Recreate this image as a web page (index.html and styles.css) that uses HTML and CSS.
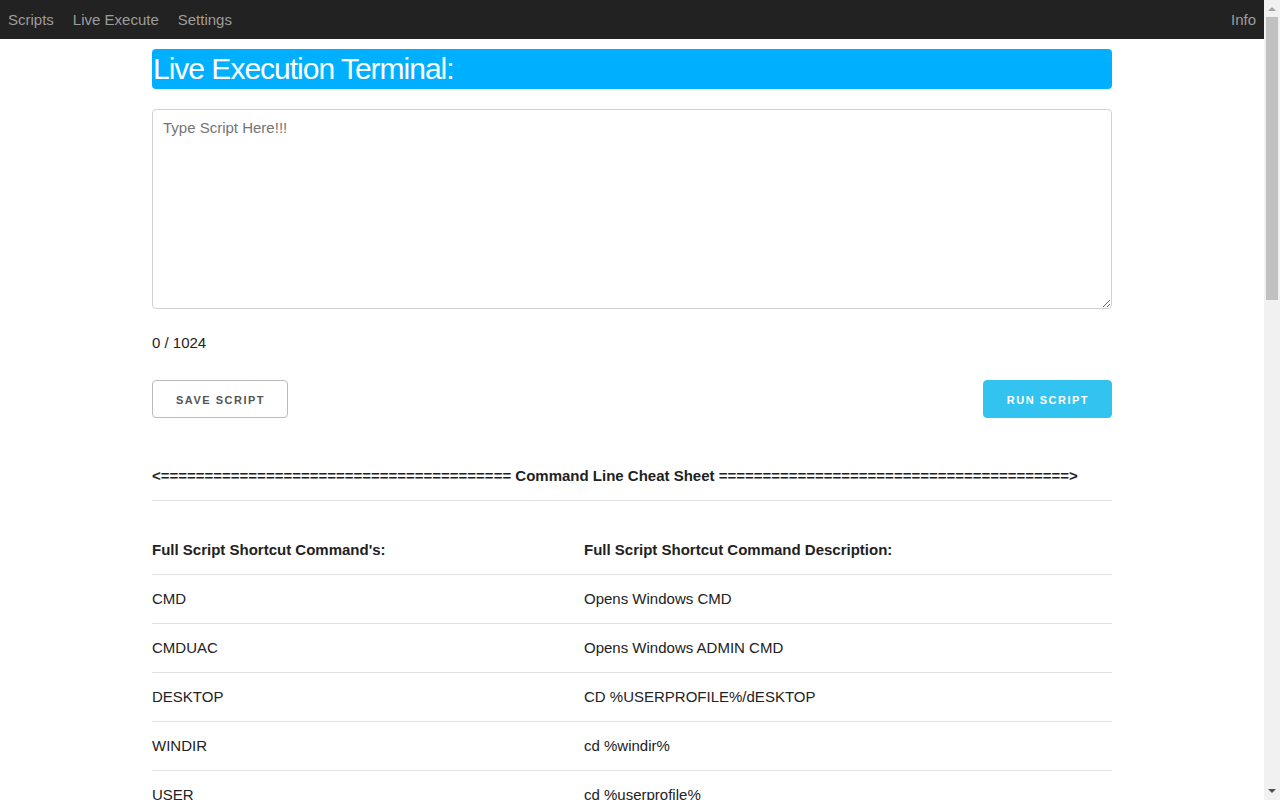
FILE: index.html
```html
<!DOCTYPE html>
<html lang="en">
<head>
<meta charset="utf-8">
<title>Live Execute</title>
<link rel="stylesheet" href="styles.css">
</head>
<body>
<div class="page">
<nav class="topnav">
  <div class="nav-left">
    <a href="#">Scripts</a>
    <a href="#">Live Execute</a>
    <a href="#">Settings</a>
  </div>
  <a href="#" class="nav-right">Info</a>
</nav>
<main class="container">
  <h3 class="title">Live Execution Terminal:</h3>
  <textarea class="script-box" placeholder="Type Script Here!!!"></textarea>
  <p class="counter">0 / 1024</p>
  <div class="actions">
    <button class="button">Save Script</button>
    <button class="button button-primary">Run Script</button>
  </div>
  <table class="cheat-title">
    <thead><tr><th>&lt;======================================== Command Line Cheat Sheet ========================================&gt;</th></tr></thead>
  </table>
  <table class="cheat">
    <colgroup><col class="col1"><col></colgroup>
    <thead>
      <tr><th>Full Script Shortcut Command's:</th><th>Full Script Shortcut Command Description:</th></tr>
    </thead>
    <tbody>
      <tr><td>CMD</td><td>Opens Windows CMD</td></tr>
      <tr><td>CMDUAC</td><td>Opens Windows ADMIN CMD</td></tr>
      <tr><td>DESKTOP</td><td>CD %USERPROFILE%/dESKTOP</td></tr>
      <tr><td>WINDIR</td><td>cd %windir%</td></tr>
      <tr><td>USER</td><td>cd %userprofile%</td></tr>
      <tr><td>DOWNLOADS</td><td>cd %userprofile%/Downloads</td></tr>
      <tr><td>DOCUMENTS</td><td>cd %userprofile%/Documents</td></tr>
      <tr><td>TEMP</td><td>cd %temp%</td></tr>
      <tr><td>APPDATA</td><td>cd %appdata%</td></tr>
      <tr><td>PROGRAMS</td><td>cd %programfiles%</td></tr>
      <tr><td>SYSTEM32</td><td>cd %windir%/System32</td></tr>
      <tr><td>IPCONFIG</td><td>ipconfig /all</td></tr>
      <tr><td>PING</td><td>ping 8.8.8.8</td></tr>
      <tr><td>FLUSHDNS</td><td>ipconfig /flushdns</td></tr>
      <tr><td>TASKLIST</td><td>tasklist</td></tr>
      <tr><td>TASKMGR</td><td>Opens Task Manager</td></tr>
      <tr><td>NOTEPAD</td><td>Opens Notepad</td></tr>
      <tr><td>CALC</td><td>Opens Calculator</td></tr>
      <tr><td>EXPLORER</td><td>Opens File Explorer</td></tr>
      <tr><td>CONTROL</td><td>Opens Control Panel</td></tr>
      <tr><td>REGEDIT</td><td>Opens Registry Editor</td></tr>
      <tr><td>SERVICES</td><td>Opens Services</td></tr>
      <tr><td>SYSINFO</td><td>systeminfo</td></tr>
      <tr><td>SHUTDOWN</td><td>shutdown /s /t 0</td></tr>
      <tr><td>RESTART</td><td>shutdown /r /t 0</td></tr>
      <tr><td>LOGOFF</td><td>shutdown /l</td></tr>
      <tr><td>LOCK</td><td>rundll32.exe user32.dll,LockWorkStation</td></tr>
      <tr><td>CLS</td><td>cls</td></tr>
      <tr><td>DIR</td><td>dir</td></tr>
      <tr><td>EXIT</td><td>exit</td></tr>
    </tbody>
  </table>
</main>
</div>
<div class="fake-scrollbar" aria-hidden="true">
  <svg class="sb-arrow" width="16" height="17" viewBox="0 0 16 17"><path d="M4 11 L8 7 L12 11 Z" fill="#a3a3a3"/></svg>
  <div class="sb-track"><div class="sb-thumb"></div></div>
  <svg class="sb-arrow" width="16" height="17" viewBox="0 0 16 17"><path d="M4 6 L8 10 L12 6 Z" fill="#505050"/></svg>
</div>
</body>
</html>
```

FILE: styles.css
```css
html { font-size: 62.5%; }
body {
  margin: 0;
  font-family: "Liberation Sans", Arial, sans-serif;
  font-size: 1.5rem;
  line-height: 1.6;
  color: #222;
  background: #fff;
}
.page {
  margin-right: 16px;
}
.topnav {
  height: 39px;
  background: #222;
  display: flex;
  align-items: center;
  justify-content: space-between;
  padding: 0 8px;
}
.nav-left { display: flex; gap: 19px; }
.topnav a {
  color: #9d9d9d;
  text-decoration: none;
  font-size: 15px;
  line-height: 20px;
}
.container {
  width: 960px;
  margin: 0 auto;
  padding-top: 10px;
}
.title {
  margin: 0 0 20px;
  height: 40px;
  line-height: 39px;
  font-size: 30px;
  font-weight: 400;
  letter-spacing: -1px;
  color: #fff;
  background: #00b0ff;
  border-radius: 4px;
  padding-left: 1px;
}
.script-box {
  display: block;
  box-sizing: border-box;
  width: 100%;
  height: 200px;
  margin: 0;
  padding: 6px 10px;
  border: 1px solid #d1d1d1;
  border-radius: 4px;
  font-family: "Liberation Sans", Arial, sans-serif;
  font-size: 15px;
  line-height: 24px;
  color: #222;
  resize: vertical;
}
.script-box::placeholder { color: #757575; }
.counter {
  margin: 22px 0 25px;
  color: #222;
}
.actions {
  display: flex;
  justify-content: space-between;
  margin-bottom: 34px;
}
.button {
  height: 38px;
  padding: 0 22px 0 23px;
  font-family: "Liberation Sans", Arial, sans-serif;
  font-size: 11px;
  font-weight: 700;
  letter-spacing: 1.5px;
  line-height: 38px;
  text-transform: uppercase;
  color: #555;
  background: transparent;
  border: 1px solid #bbb;
  border-radius: 4px;
  cursor: pointer;
}
.button-primary {
  color: #fff;
  background: #33c3f0;
  border-color: #33c3f0;
}
table {
  width: 100%;
  border-collapse: collapse;
  border-spacing: 0;
  margin-bottom: 25px;
}
.cheat { table-layout: fixed; }
.cheat .col1 { width: 417px; }
th, td {
  text-align: left;
  padding: 12px 15px;
  border-bottom: 1px solid #e1e1e1;
  font-size: 15px;
  line-height: 24px;
}
th:first-child, td:first-child { padding-left: 0; }
th:last-child, td:last-child { padding-right: 0; }
th { font-weight: 700; color: #222; }
td { color: #222; }

.fake-scrollbar {
  position: fixed;
  top: 0;
  right: 0;
  width: 16px;
  height: 100vh;
  background: #f1f1f1;
  display: flex;
  flex-direction: column;
}
.sb-arrow { display: block; flex: none; }
.sb-track {
  flex: 1;
  padding: 0 2px;
}
.sb-thumb {
  height: 283px;
  background: #c1c1c1;
}
```
